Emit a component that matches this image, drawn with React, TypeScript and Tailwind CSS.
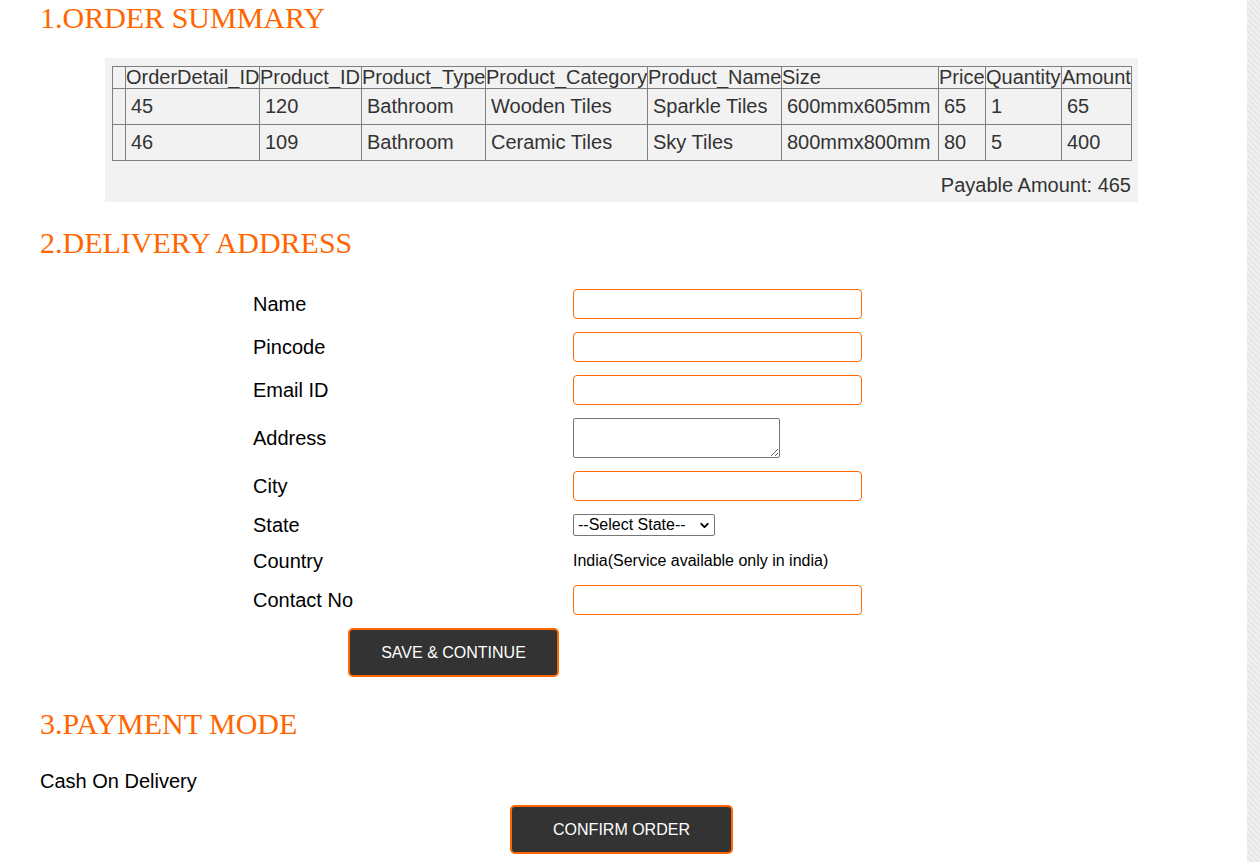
import type { ReactNode } from "react";
import { ChevronDown } from "lucide-react";

type OrderRow = {
  id: number;
  productId: number;
  type: string;
  category: string;
  name: string;
  size: string;
  price: number;
  qty: number;
  amount: number;
};

const rows: OrderRow[] = [
  { id: 45, productId: 120, type: "Bathroom", category: "Wooden Tiles", name: "Sparkle Tiles", size: "600mmx605mm", price: 65, qty: 1, amount: 65 },
  { id: 46, productId: 109, type: "Bathroom", category: "Ceramic Tiles", name: "Sky Tiles", size: "800mmx800mm", price: 80, qty: 5, amount: 400 },
];

const columns = [
  { label: "", w: "w-[13px]" },
  { label: "OrderDetail_ID", w: "w-[134px]" },
  { label: "Product_ID", w: "w-[102px]" },
  { label: "Product_Type", w: "w-[124px]" },
  { label: "Product_Category", w: "w-[162px]" },
  { label: "Product_Name", w: "w-[134px]" },
  { label: "Size", w: "w-[157px]" },
  { label: "Price", w: "w-[47px]" },
  { label: "Quantity", w: "w-[76px]" },
  { label: "Amount", w: "w-[70px]" },
];

function Heading({ children, className = "" }: { children: ReactNode; className?: string }) {
  return (
    <h2 className={`font-['Liberation_Serif',serif] text-[30px] leading-[36px] text-[#ff6600] ${className}`}>
      {children}
    </h2>
  );
}

function FormRow({ label, children, h }: { label: string; children: ReactNode; h: string }) {
  return (
    <div className={`flex items-center ${h}`}>
      <label className="w-[320px] text-[20px] text-black">{label}</label>
      {children}
    </div>
  );
}

const inputCls = "w-[289px] h-[30px] border border-[#ff6a00] rounded-[4px] bg-white px-2 text-[16px] outline-none";

export default function App() {
  return (
    <div className="flex min-h-screen bg-white font-['Liberation_Sans',Arial,sans-serif]">
      <main className="flex-1 pl-[40px]">
        <Heading>1.ORDER SUMMARY</Heading>

        <div className="mt-[22px] ml-[65px] w-[1033px] bg-[#f2f2f2] px-[7px] pt-[8px] pb-[5px]">
          <table className="w-[1019px] table-fixed border-collapse text-[20px] leading-[23px] text-[#333]">
            <thead>
              <tr>
                {columns.map((c, i) => (
                  <th
                    key={i}
                    className={`${c.w} border border-[#7f7f7f] p-0 text-left font-normal leading-[21px] whitespace-nowrap overflow-hidden`}
                  >
                    {c.label}
                  </th>
                ))}
              </tr>
            </thead>
            <tbody>
              {rows.map((r) => (
                <tr key={r.id}>
                  <td className="border border-[#7f7f7f]"></td>
                  {[r.id, r.productId, r.type, r.category, r.name, r.size, r.price, r.qty, r.amount].map((v, i) => (
                    <td key={i} className="border border-[#7f7f7f] px-[5px] py-[6px] whitespace-nowrap">
                      {v}
                    </td>
                  ))}
                </tr>
              ))}
            </tbody>
          </table>
          <p className="mt-[13px] text-right text-[20px] leading-[23px] text-[#333]">Payable Amount: 465</p>
        </div>

        <Heading className="mt-[23px]">2.DELIVERY ADDRESS</Heading>

        <form className="mt-[28px] ml-[213px] flex flex-col gap-[13px]" onSubmit={(e) => e.preventDefault()}>
          <FormRow label="Name" h="h-[30px]">
            <input className={inputCls} />
          </FormRow>
          <FormRow label="Pincode" h="h-[30px]">
            <input className={inputCls} />
          </FormRow>
          <FormRow label="Email ID" h="h-[30px]">
            <input className={inputCls} />
          </FormRow>
          <FormRow label="Address" h="h-[40px]">
            <textarea className="block w-[207px] h-[40px] border border-[#767676] rounded-[2px] bg-white" />
          </FormRow>
          <FormRow label="City" h="h-[30px]">
            <input className={inputCls} />
          </FormRow>
          <FormRow label="State" h="h-[22px]">
            <div className="relative">
              <select className="block appearance-none w-[142px] h-[22px] border border-[#767676] rounded-[2px] bg-white pl-[4px] text-[16px] leading-[20px] text-black">
                <option>--Select State--</option>
              </select>
              <ChevronDown
                size={13}
                strokeWidth={3.5}
                className="pointer-events-none absolute right-[4px] top-[5px] text-black"
              />
            </div>
          </FormRow>
          <FormRow label="Country" h="h-[23px]">
            <span className="text-[16px] text-black">India(Service available only in india)</span>
          </FormRow>
          <FormRow label="Contact No" h="h-[30px]">
            <input className={inputCls} />
          </FormRow>
          <div>
            <button
              type="submit"
              className="ml-[95px] w-[211px] h-[49px] bg-[#333] border-2 border-[#ff6600] rounded-[5px] text-white text-[16px]"
            >
              SAVE &amp; CONTINUE
            </button>
          </div>
        </form>

        <Heading className="mt-[29px]">3.PAYMENT MODE</Heading>
        <p className="mt-[28px] text-[20px] leading-[23px] text-black">Cash On Delivery</p>
        <div className="mt-[12px] flex justify-center pr-[44px]">
          <button className="w-[223px] h-[49px] bg-[#333] border-2 border-[#ff6600] rounded-[5px] text-white text-[16px]">
            CONFIRM ORDER
          </button>
        </div>
      </main>
      <div className="w-[13px] shrink-0 bg-[#ececec] bg-[repeating-linear-gradient(45deg,#e4e4e4_0px,#f3f3f3_2px,#e4e4e4_4px)]" />
    </div>
  );
}
